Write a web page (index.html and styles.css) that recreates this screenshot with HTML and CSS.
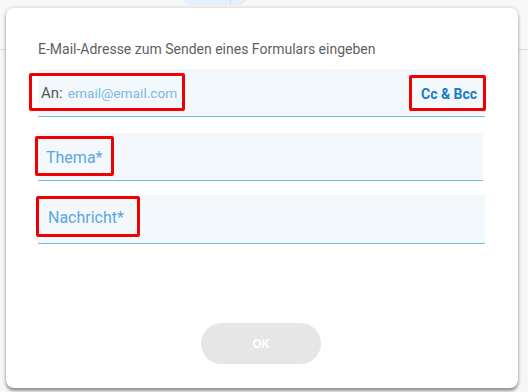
FILE: index.html
```html
<!DOCTYPE html>
<html lang="de">
<head>
<meta charset="utf-8">
<title>E-Mail senden</title>
<link rel="stylesheet" href="styles.css">
</head>
<body>
<div class="page">
  <div class="topbar">
    <div class="pill"><span class="pill-half"></span><span class="pill-half"></span></div>
  </div>
  <div class="rule"></div>
  <div class="dialog">
    <p class="title">E-Mail-Adresse zum Senden eines Formulars eingeben</p>
    <div class="field field-to">
      <span class="mark mark-to"><span class="to-label">An:</span><span class="to-value">email@email.com</span></span>
      <span class="mark mark-cc">Cc &amp; Bcc</span>
    </div>
    <div class="field field-subject">
      <span class="mark mark-subject">Thema*</span>
    </div>
    <div class="field field-message">
      <span class="mark mark-message">Nachricht*</span>
    </div>
    <div class="actions">
      <button class="ok" type="button">OK</button>
    </div>
  </div>
</div>
</body>
</html>
```
FILE: styles.css
```css
* { box-sizing: border-box; }
html, body { margin: 0; padding: 0; }
body {
  width: 528px;
  height: 392px;
  overflow: hidden;
  background: #f6f6f6;
  font-family: Roboto, "Liberation Sans", Arial, sans-serif;
}
.page {
  position: relative;
  width: 528px;
  height: 392px;
}
.topbar {
  position: absolute;
  top: 0;
  left: 0;
  width: 528px;
  height: 50px;
  background: #f8f8f8;
}
.pill {
  position: absolute;
  top: -20px;
  left: 180px;
  width: 70px;
  height: 25px;
  border-radius: 13px;
  overflow: hidden;
  display: flex;
}
.pill-half {
  flex: 1;
  background: #e3f0fc;
}
.pill-half + .pill-half {
  border-left: 1px solid #cfe0f0;
  flex: 0 0 20px;
}
.rule {
  position: absolute;
  top: 49px;
  left: 0;
  width: 528px;
  height: 1px;
  background: #dcdcdc;
}
.dialog {
  position: absolute;
  top: 8px;
  left: 6px;
  width: 512px;
  height: 380px;
  background: #fff;
  border-radius: 8px;
  box-shadow: 0 3px 3px rgba(0,0,0,0.35), 0 0 4px rgba(0,0,0,0.18);
  padding: 33px 33px 0 32px;
  display: flex;
  flex-direction: column;
}
.title {
  margin: 0;
  font-size: 14px;
  line-height: 16px;
  color: #5f5f5f;
}
.field {
  display: flex;
  align-items: flex-start;
  justify-content: space-between;
  height: 48px;
  background: #f3f8fc;
  border-bottom: 1px solid #7db9e2;
}
.field-to {
  margin-top: 12px;
  padding-top: 4px;
}
.field-subject {
  margin-top: 16px;
  width: 445px;
  padding-top: 3px;
}
.field-message {
  margin-top: 14px;
  height: 49px;
  padding-top: 1px;
}
.mark {
  display: flex;
  align-items: center;
  border: 3px solid #f00000;
  border-radius: 2px;
}
.mark-to {
  margin-left: -9px;
  width: 156px;
  height: 38px;
  padding: 2px 0 0 9px;
  white-space: nowrap;
}
.to-label {
  color: #555;
  font-size: 15px;
  margin-right: 5px;
}
.to-value {
  color: #7cb9e4;
  font-size: 13.7px;
}
.mark-cc {
  margin-top: 2px;
  margin-right: -1px;
  width: 77px;
  height: 36px;
  padding: 1px 0 0 9px;
  font-size: 14px;
  font-weight: 700;
  color: #1b7cc8;
}
.mark-subject,
.mark-message {
  font-size: 16px;
  color: #5ba7de;
}
.mark-subject {
  margin-left: -3px;
  width: 79px;
  height: 40px;
  padding: 2px 0 0 8px;
}
.mark-message {
  margin-left: -2px;
  width: 104px;
  height: 41px;
  padding: 2px 0 0 9px;
}
.actions {
  display: flex;
  justify-content: center;
  margin-top: 79px;
}
.ok {
  width: 120px;
  height: 41px;
  border: 0;
  border-radius: 21px;
  background: #e6e6e6;
  color: #fff;
  font-family: Roboto, "Liberation Sans", Arial, sans-serif;
  font-size: 13px;
  font-weight: 700;
  padding: 0;
  margin-left: -1px;
}
```
